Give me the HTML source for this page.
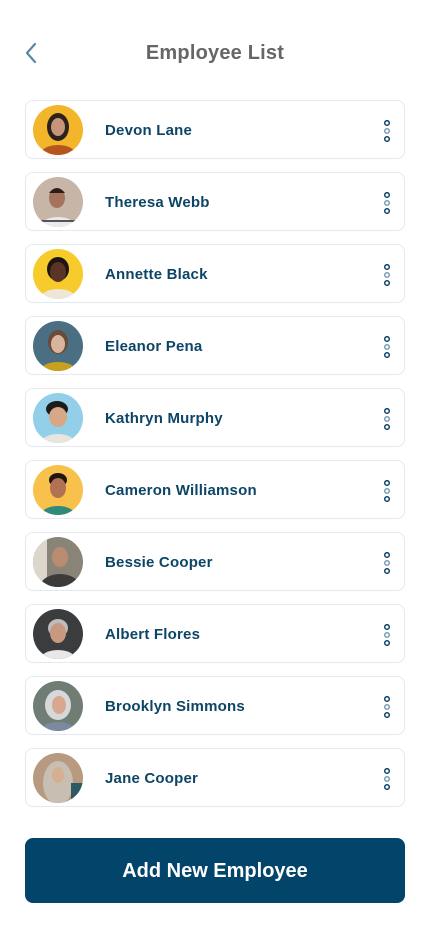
<!DOCTYPE html>
<html><head><meta charset="utf-8">
<style>
*{margin:0;padding:0;box-sizing:border-box}
body{width:430px;height:932px;background:#fff;font-family:"Liberation Sans",sans-serif;position:relative;overflow:hidden}
.back{position:absolute;left:24px;top:42px}
h1{position:absolute;top:42px;left:0;width:430px;text-align:center;font-size:20px;font-weight:bold;color:#666;letter-spacing:0.2px}
.card{position:absolute;left:25px;width:380px;height:59px;border:1px solid #e3e9ee;border-radius:8px;background:#fff}
.av{position:absolute;left:7px;top:4px;width:50px;height:50px;border-radius:50%;overflow:hidden}
.name{position:absolute;left:79px;top:21px;font-size:15px;font-weight:bold;color:#0d4566;letter-spacing:0.2px}
.dots{position:absolute;left:357px;top:19px}
.btn{position:absolute;left:25px;top:838px;width:380px;height:65px;border-radius:8px;background:#02446a;color:#fff;font-size:20px;font-weight:bold;text-align:center;line-height:66px}
</style></head><body>
<svg class="back" width="14" height="22" viewBox="0 0 14 22"><path d="M11 2 L3 11 L11 20" fill="none" stroke="#5b87a6" stroke-width="2.2" stroke-linecap="round" stroke-linejoin="round"/></svg>
<h1>Employee List</h1>

<div class="card" style="top:100px"><svg class="av" viewBox="0 0 50 50"><rect width="50" height="50" fill="#f3b62a"/><ellipse cx="25" cy="22" rx="11" ry="14" fill="#2b211d"/><ellipse cx="25" cy="22" rx="7" ry="9" fill="#c9937a"/><ellipse cx="25" cy="50" rx="18" ry="10" fill="#b5561f"/></svg><div class="name">Devon Lane</div><svg class="dots" width="8" height="22"><circle cx="4" cy="3" r="2.3" fill="none" stroke="#0d4566" stroke-width="1.5"/><circle cx="4" cy="11" r="2.3" fill="none" stroke="#7a9bb0" stroke-width="1.5"/><circle cx="4" cy="19" r="2.3" fill="none" stroke="#0d4566" stroke-width="1.5"/></svg></div>

<div class="card" style="top:172px"><svg class="av" viewBox="0 0 50 50"><rect width="50" height="50" fill="#c7b5a8"/><ellipse cx="24" cy="21" rx="8" ry="10" fill="#a5735c"/><path d="M16 16 Q24 6 32 16 Z" fill="#2a1e18"/><ellipse cx="25" cy="50" rx="18" ry="10" fill="#e9e9ee"/><rect x="8" y="43" width="34" height="2" fill="#555"/></svg><div class="name">Theresa Webb</div><svg class="dots" width="8" height="22"><circle cx="4" cy="3" r="2.3" fill="none" stroke="#0d4566" stroke-width="1.5"/><circle cx="4" cy="11" r="2.3" fill="none" stroke="#7a9bb0" stroke-width="1.5"/><circle cx="4" cy="19" r="2.3" fill="none" stroke="#0d4566" stroke-width="1.5"/></svg></div>

<div class="card" style="top:244px"><svg class="av" viewBox="0 0 50 50"><rect width="50" height="50" fill="#f6cb2b"/><ellipse cx="25" cy="20" rx="11" ry="12" fill="#1e1512"/><ellipse cx="25" cy="23" rx="8" ry="10" fill="#5a3424"/><ellipse cx="25" cy="50" rx="18" ry="10" fill="#efe6da"/></svg><div class="name">Annette Black</div><svg class="dots" width="8" height="22"><circle cx="4" cy="3" r="2.3" fill="none" stroke="#0d4566" stroke-width="1.5"/><circle cx="4" cy="11" r="2.3" fill="none" stroke="#7a9bb0" stroke-width="1.5"/><circle cx="4" cy="19" r="2.3" fill="none" stroke="#0d4566" stroke-width="1.5"/></svg></div>

<div class="card" style="top:316px"><svg class="av" viewBox="0 0 50 50"><rect width="50" height="50" fill="#4b6f82"/><ellipse cx="25" cy="21" rx="10" ry="12" fill="#6a4a38"/><ellipse cx="25" cy="23" rx="7" ry="9" fill="#d9b5a0"/><ellipse cx="25" cy="50" rx="18" ry="9" fill="#c6a01e"/></svg><div class="name">Eleanor Pena</div><svg class="dots" width="8" height="22"><circle cx="4" cy="3" r="2.3" fill="none" stroke="#0d4566" stroke-width="1.5"/><circle cx="4" cy="11" r="2.3" fill="none" stroke="#7a9bb0" stroke-width="1.5"/><circle cx="4" cy="19" r="2.3" fill="none" stroke="#0d4566" stroke-width="1.5"/></svg></div>

<div class="card" style="top:388px"><svg class="av" viewBox="0 0 50 50"><rect width="50" height="50" fill="#93cfe8"/><ellipse cx="24" cy="16" rx="11" ry="8" fill="#1c1a1a"/><ellipse cx="25" cy="24" rx="9" ry="10" fill="#d8a886"/><ellipse cx="25" cy="50" rx="17" ry="9" fill="#e8e4de"/></svg><div class="name">Kathryn Murphy</div><svg class="dots" width="8" height="22"><circle cx="4" cy="3" r="2.3" fill="none" stroke="#0d4566" stroke-width="1.5"/><circle cx="4" cy="11" r="2.3" fill="none" stroke="#7a9bb0" stroke-width="1.5"/><circle cx="4" cy="19" r="2.3" fill="none" stroke="#0d4566" stroke-width="1.5"/></svg></div>

<div class="card" style="top:460px"><svg class="av" viewBox="0 0 50 50"><rect width="50" height="50" fill="#f8c14c"/><ellipse cx="25" cy="15" rx="9" ry="7" fill="#1f1612"/><ellipse cx="25" cy="23" rx="8" ry="10" fill="#b07253"/><ellipse cx="25" cy="50" rx="17" ry="9" fill="#2f8a7a"/></svg><div class="name">Cameron Williamson</div><svg class="dots" width="8" height="22"><circle cx="4" cy="3" r="2.3" fill="none" stroke="#0d4566" stroke-width="1.5"/><circle cx="4" cy="11" r="2.3" fill="none" stroke="#7a9bb0" stroke-width="1.5"/><circle cx="4" cy="19" r="2.3" fill="none" stroke="#0d4566" stroke-width="1.5"/></svg></div>

<div class="card" style="top:532px"><svg class="av" viewBox="0 0 50 50"><rect width="50" height="50" fill="#8a8378"/><rect x="0" y="0" width="14" height="50" fill="#ddd6cc"/><ellipse cx="27" cy="20" rx="8" ry="10" fill="#b98c72"/><ellipse cx="27" cy="50" rx="20" ry="13" fill="#3c3b3a"/></svg><div class="name">Bessie Cooper</div><svg class="dots" width="8" height="22"><circle cx="4" cy="3" r="2.3" fill="none" stroke="#0d4566" stroke-width="1.5"/><circle cx="4" cy="11" r="2.3" fill="none" stroke="#7a9bb0" stroke-width="1.5"/><circle cx="4" cy="19" r="2.3" fill="none" stroke="#0d4566" stroke-width="1.5"/></svg></div>

<div class="card" style="top:604px"><svg class="av" viewBox="0 0 50 50"><rect width="50" height="50" fill="#3a3c3e"/><ellipse cx="25" cy="19" rx="10" ry="9" fill="#bdbdbd"/><ellipse cx="25" cy="24" rx="8" ry="10" fill="#c99880"/><ellipse cx="25" cy="51" rx="18" ry="10" fill="#e8e8e8"/></svg><div class="name">Albert Flores</div><svg class="dots" width="8" height="22"><circle cx="4" cy="3" r="2.3" fill="none" stroke="#0d4566" stroke-width="1.5"/><circle cx="4" cy="11" r="2.3" fill="none" stroke="#7a9bb0" stroke-width="1.5"/><circle cx="4" cy="19" r="2.3" fill="none" stroke="#0d4566" stroke-width="1.5"/></svg></div>

<div class="card" style="top:676px"><svg class="av" viewBox="0 0 50 50"><rect width="50" height="50" fill="#6f7d74"/><ellipse cx="25" cy="24" rx="13" ry="15" fill="#d6d8da"/><ellipse cx="26" cy="24" rx="7" ry="9" fill="#d7a88f"/><ellipse cx="25" cy="51" rx="18" ry="10" fill="#7c8aa0"/></svg><div class="name">Brooklyn Simmons</div><svg class="dots" width="8" height="22"><circle cx="4" cy="3" r="2.3" fill="none" stroke="#0d4566" stroke-width="1.5"/><circle cx="4" cy="11" r="2.3" fill="none" stroke="#7a9bb0" stroke-width="1.5"/><circle cx="4" cy="19" r="2.3" fill="none" stroke="#0d4566" stroke-width="1.5"/></svg></div>

<div class="card" style="top:748px"><svg class="av" viewBox="0 0 50 50"><rect width="50" height="50" fill="#b89a80"/><ellipse cx="25" cy="30" rx="15" ry="22" fill="#c8beb2"/><ellipse cx="25" cy="22" rx="6" ry="8" fill="#d6ae92"/><rect x="38" y="30" width="12" height="20" fill="#2e5a66"/></svg><div class="name">Jane Cooper</div><svg class="dots" width="8" height="22"><circle cx="4" cy="3" r="2.3" fill="none" stroke="#0d4566" stroke-width="1.5"/><circle cx="4" cy="11" r="2.3" fill="none" stroke="#7a9bb0" stroke-width="1.5"/><circle cx="4" cy="19" r="2.3" fill="none" stroke="#0d4566" stroke-width="1.5"/></svg></div>

<div class="btn">Add New Employee</div>
</body></html>
